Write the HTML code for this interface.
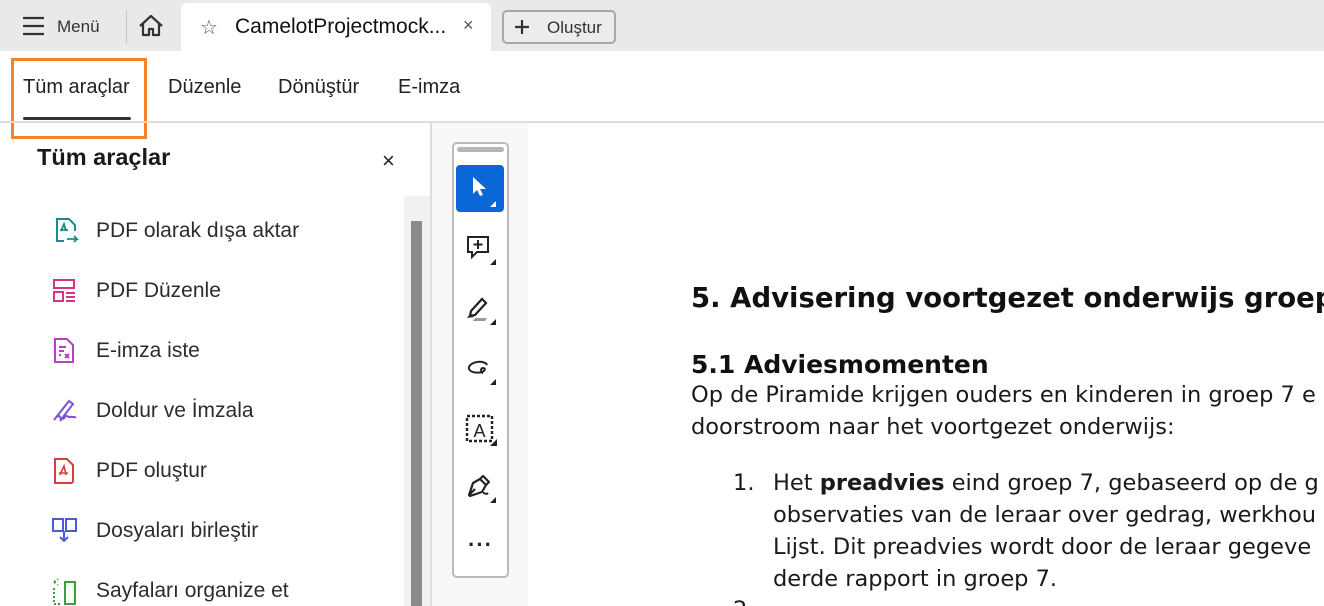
<!DOCTYPE html>
<html><head><meta charset="utf-8"><style>
*{margin:0;padding:0;box-sizing:border-box}
html,body{width:1324px;height:606px;overflow:hidden}
body{background:#fff;font-family:"Liberation Sans",Arial,sans-serif;color:#222;position:relative}
.a{position:absolute}
.top{left:0;top:0;width:1324px;height:51px;background:#e9e9e9}
.tab{left:181px;top:3px;width:310px;height:48px;background:#fff;border-radius:6px 6px 0 0}
.nav{font-size:20px;color:#222}
.doc{font-size:22.5px;color:#1a1a1a;font-family:"DejaVu Sans",sans-serif;white-space:nowrap}
.tool{font-size:21px;color:#2c2c2c}
</style></head><body>
<div class="a top"></div>
<svg class="a" style="left:22px;top:16px" width="24" height="20"><path d="M1 2h21M1 10h21M1 18h21" stroke="#333" stroke-width="2.2"/></svg>
<div class="a" style="left:57px;top:17px;font-size:17px;color:#333">Menü</div>
<div class="a" style="left:126px;top:10px;width:1px;height:34px;background:#c8c8c8"></div>
<svg class="a" style="left:138px;top:14px" width="26" height="24"><path d="M2 12L13 2l11 10M5 9v12h6v-6h4v6h6V9" fill="none" stroke="#333" stroke-width="2.2" stroke-linejoin="round"/></svg>
<div class="a tab"></div>
<div class="a" style="left:200px;top:15px;font-size:20px;color:#555">☆</div>
<div class="a" style="left:235px;top:15px;font-size:21px;color:#111">CamelotProjectmock...</div>
<div class="a" style="left:463px;top:15px;font-size:18px;color:#555">×</div>
<div class="a" style="left:502px;top:10px;width:114px;height:34px;border:2px solid #a8a8a8;border-radius:5px;background:#ececec"></div>
<svg class="a" style="left:514px;top:19px" width="16" height="16"><path d="M8 1v14M1 8h14" stroke="#333" stroke-width="2.2"/></svg>
<div class="a" style="left:547px;top:18px;font-size:17px;color:#333">Oluştur</div>

<div class="a nav" style="left:23px;top:76px">Tüm araçlar</div>
<div class="a nav" style="left:168px;top:76px">Düzenle</div>
<div class="a nav" style="left:278px;top:76px">Dönüştür</div>
<div class="a nav" style="left:398px;top:76px">E-imza</div>
<div class="a" style="left:23px;top:117px;width:108px;height:3px;background:#333;border-radius:2px"></div>
<div class="a" style="left:11px;top:58px;width:136px;height:81px;border:3px solid #f5822a"></div>
<div class="a" style="left:0;top:121px;width:1324px;height:2px;background:#ddd"></div>

<div class="a" style="left:37px;top:144px;font-size:23.5px;font-weight:bold;color:#1a1a1a">Tüm araçlar</div>
<div class="a" style="left:382px;top:148px;font-size:22px;color:#222">×</div>
<div class="a" style="left:404px;top:196px;width:26px;height:410px;background:#f1f1f1"></div>
<div class="a" style="left:411px;top:221px;width:11px;height:385px;background:#8a8a8a"></div>
<div class="a" style="left:430px;top:123px;width:2px;height:483px;background:#ddd"></div>
<div class="a" style="left:432px;top:123px;width:96px;height:483px;background:#f8f8f8"></div>

<svg class="a" style="left:52px;top:217px" width="28" height="28"><path d="M17 2H5v22h7M17 2l6 6v6" fill="none" stroke="#1c8a8a" stroke-width="2"/><path d="M9 14l3-7 2 7M8 13h8M15 22h10l-3-3M25 22l-3 3" fill="none" stroke="#1c8a8a" stroke-width="1.8"/></svg>
<div class="a tool" style="left:96px;top:219px">PDF olarak dışa aktar</div>
<svg class="a" style="left:52px;top:278px" width="26" height="26"><path d="M2 2h20v8H2zM2 14h9v9H2zM14 15h9M14 19h9M14 23h9" fill="none" stroke="#d63384" stroke-width="2"/></svg>
<div class="a tool" style="left:96px;top:279px">PDF Düzenle</div>
<svg class="a" style="left:53px;top:337px" width="24" height="28"><path d="M2 2h12l6 6v17H2z" fill="none" stroke="#b73fc7" stroke-width="2"/><path d="M6 10h7M6 14h5M6 18h2M12 17l4 4M16 17l-4 4" stroke="#b73fc7" stroke-width="2"/></svg>
<div class="a tool" style="left:96px;top:339px">E-imza iste</div>
<svg class="a" style="left:51px;top:397px" width="28" height="28"><path d="M3 23L18 4l4 3L9 24M3 23c3-4 5-5 6-3s3 3 5 0 3 1 5 0 4 1 6 0" fill="none" stroke="#7b4fd6" stroke-width="2"/></svg>
<div class="a tool" style="left:96px;top:399px">Doldur ve İmzala</div>
<svg class="a" style="left:53px;top:457px" width="24" height="28"><path d="M2 2h12l6 6v16a2 2 0 0 1-2 2H2z" fill="none" stroke="#d93a3a" stroke-width="2"/><path d="M7 18l4-9 2 9M6 16h9" fill="none" stroke="#d93a3a" stroke-width="1.6"/></svg>
<div class="a tool" style="left:96px;top:459px">PDF oluştur</div>
<svg class="a" style="left:51px;top:517px" width="28" height="28"><path d="M2 2h10v12H2zM15 2h10v12H15zM13 14v10M9 20l4 4 4-4" fill="none" stroke="#4a5bd6" stroke-width="2"/></svg>
<div class="a tool" style="left:96px;top:519px">Dosyaları birleştir</div>
<svg class="a" style="left:51px;top:578px" width="28" height="28"><path d="M14 4h10v22H14z" fill="none" stroke="#3aa03a" stroke-width="2"/><path d="M3 10v16h8M3 4l4-3M3 4l4 3" fill="none" stroke="#3aa03a" stroke-width="2" stroke-dasharray="2 2"/></svg>
<div class="a tool" style="left:96px;top:579px">Sayfaları organize et</div>

<div class="a" style="left:452px;top:142px;width:57px;height:436px;border:2px solid #bbb;border-radius:5px;background:#fff"></div>
<div class="a" style="left:457px;top:147px;width:47px;height:5px;background:#b5b5b5;border-radius:3px"></div>
<div class="a" style="left:456px;top:165px;width:48px;height:47px;background:#0a68d6;border-radius:4px"></div>
<svg class="a" style="left:456px;top:165px" width="48" height="47"><path d="M17 12v17l4-4 3 6 3-1-3-6h6z" fill="#fff"/><path d="M40 36v6h-6z" fill="#fff"/></svg>
<svg class="a" style="left:465px;top:235px" width="34" height="34"><path d="M3 2h20v15H12l-5 5v-5H3z" fill="none" stroke="#222" stroke-width="2"/><path d="M13 5v9M8.5 9.5h9" stroke="#222" stroke-width="2"/><path d="M31 24v6h-6z" fill="#222"/></svg>
<svg class="a" style="left:465px;top:295px" width="34" height="34"><path d="M6 16L17 4l4 4-11 12-5 1z" fill="none" stroke="#222" stroke-width="2.2"/><path d="M2 23l3-4 4 3z" fill="#222"/><path d="M10 23h12l-2 3H8z" fill="#999"/><path d="M31 24v6h-6z" fill="#222"/></svg>
<svg class="a" style="left:465px;top:355px" width="34" height="34"><path d="M22 10c-2-5-16-4-18 2-1 4 5 7 13 5 3-1 4-4 1-4s-2 5 0 5" fill="none" stroke="#222" stroke-width="2"/><path d="M31 24v6h-6z" fill="#222"/></svg>
<svg class="a" style="left:465px;top:413px" width="34" height="36"><rect x="2" y="3" width="25" height="25" fill="none" stroke="#222" stroke-width="2.4" stroke-dasharray="3 2"/><text x="14.5" y="24" font-family="Liberation Sans" font-size="18" text-anchor="middle" fill="#222">A</text><path d="M32 26v7h-7z" fill="#222"/></svg>
<svg class="a" style="left:465px;top:473px" width="34" height="34"><path d="M4 22l4-12 7-4 6 6-4 7-12 4zM15 6l3-3 6 6-3 3M4 22l6-6" fill="none" stroke="#222" stroke-width="2.2" stroke-linejoin="round"/><path d="M18 20c2 0 3 2 5 0" fill="none" stroke="#222" stroke-width="2"/><path d="M31 24v6h-6z" fill="#222"/></svg>
<div class="a" style="left:468px;top:532px;font-size:22px;font-weight:bold;color:#222;letter-spacing:1px">···</div>

<div class="a doc" style="left:691px;top:282px;font-size:27.5px;font-weight:bold;color:#111">5. Advisering voortgezet onderwijs groep</div>
<div class="a doc" style="left:691px;top:350px;font-size:25px;font-weight:bold;color:#111">5.1 Adviesmomenten</div>
<div class="a doc" style="left:691px;top:382px">Op de Piramide krijgen ouders en kinderen in groep 7 e</div>
<div class="a doc" style="left:691px;top:414px">doorstroom naar het voortgezet onderwijs:</div>
<div class="a doc" style="left:733px;top:470px">1.</div>
<div class="a doc" style="left:773px;top:470px">Het <b>preadvies</b> eind groep 7, gebaseerd op de g</div>
<div class="a doc" style="left:773px;top:502px">observaties van de leraar over gedrag, werkhou</div>
<div class="a doc" style="left:773px;top:534px">Lijst. Dit preadvies wordt door de leraar gegeve</div>
<div class="a doc" style="left:773px;top:566px">derde rapport in groep 7.</div>
<div class="a doc" style="left:733px;top:597px">2.</div>
</body></html>
